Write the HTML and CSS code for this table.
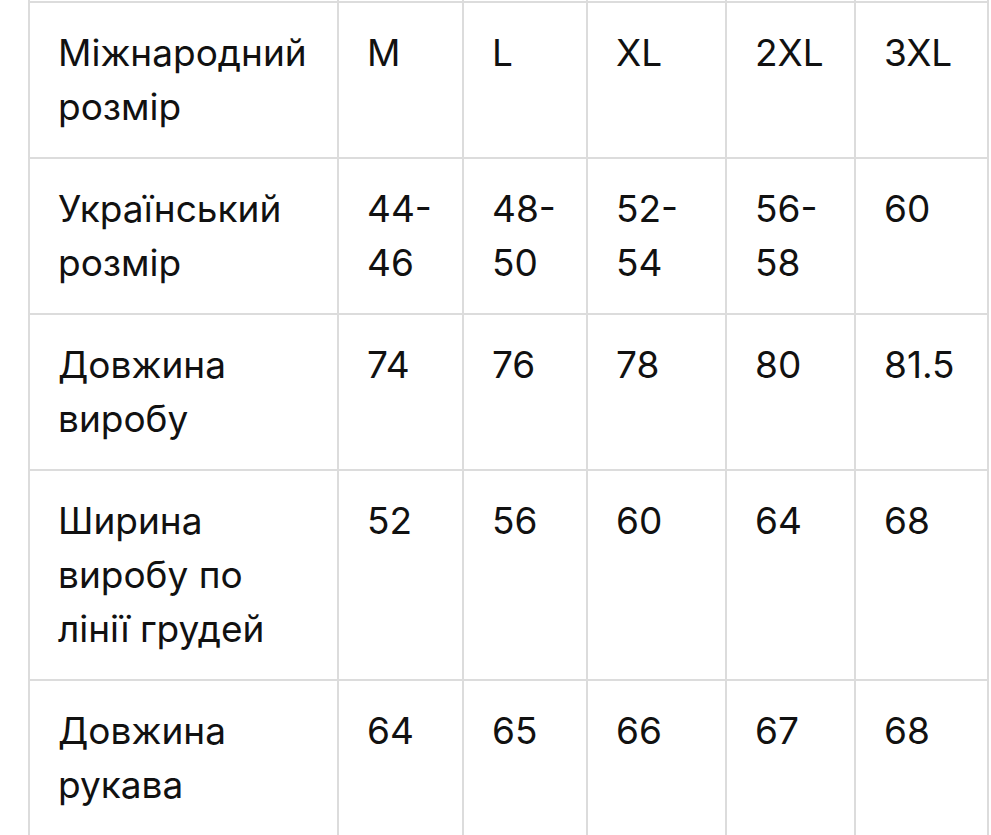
FILE: index.html
```html
<!DOCTYPE html>
<html lang="uk">
<head>
<meta charset="utf-8">
<title>Таблиця розмірів</title>
<link rel="stylesheet" href="styles.css">
</head>
<body>
<table class="sizes">
  <colgroup>
    <col class="c-label">
    <col class="c-m">
    <col class="c-l">
    <col class="c-xl">
    <col class="c-2xl">
    <col class="c-3xl">
  </colgroup>
  <tbody>
    <tr class="cut"><td></td><td></td><td></td><td></td><td></td><td></td></tr>
    <tr><td>Міжнародний розмір</td><td>M</td><td>L</td><td>XL</td><td>2XL</td><td>3XL</td></tr>
    <tr><td>Український розмір</td><td>44-46</td><td>48-50</td><td>52-54</td><td>56-58</td><td>60</td></tr>
    <tr><td>Довжина виробу</td><td>74</td><td>76</td><td>78</td><td>80</td><td>81.5</td></tr>
    <tr><td>Ширина виробу по лінії грудей</td><td>52</td><td>56</td><td>60</td><td>64</td><td>68</td></tr>
    <tr><td>Довжина рукава</td><td>64</td><td>65</td><td>66</td><td>67</td><td>68</td></tr>
  </tbody>
</table>
</body>
</html>
```

FILE: styles.css
```css
html, body {
  margin: 0;
  padding: 0;
  background: #ffffff;
}

body {
  font-family: Inter, Roboto, "Noto Sans", sans-serif;
  color: #111111;
}

.sizes {
  border-collapse: collapse;
  table-layout: fixed;
  width: 959px;
  margin-left: 28px;
}

.c-label { width: 309px; }
.c-m { width: 125px; }
.c-l { width: 124px; }
.c-xl { width: 139px; }
.c-2xl { width: 129px; }
.c-3xl { width: 133px; }

.sizes td {
  border: 2px solid #dcdcdc;
  padding: 23px 18px 23px 28px;
  font-size: 37px;
  line-height: 54px;
  vertical-align: top;
  text-align: left;
  word-wrap: break-word;
  hyphens: none;
}

.sizes tr.cut td {
  border-top: none;
  padding: 0;
  height: 1px;
  line-height: 1px;
  font-size: 1px;
}
```
